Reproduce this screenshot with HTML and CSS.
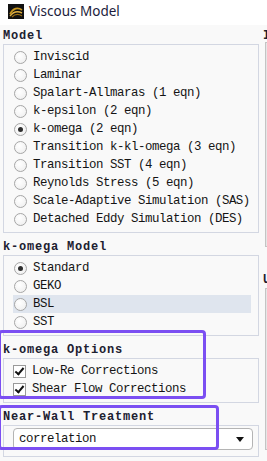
FILE: index.html
```html
<!DOCTYPE html>
<html lang="en">
<head>
  <meta charset="UTF-8" />
  <meta name="viewport" content="width=device-width, initial-scale=1" />
  <title>Viscous Model</title>
  <link rel="stylesheet" href="styles.css">
</head>
<body>
  <!-- Window title -->
  <div class="titlebar">
    <svg class="app-icon" width="16" height="15" viewBox="0 0 16 15">
      <rect width="16" height="15" fill="#111"/>
      <path d="M2 10 C5 4, 10 3, 14 6" stroke="#c8961e" stroke-width="1.6" fill="none"/>
      <path d="M2 12 C6 7, 10 7, 14 9" stroke="#e0b040" stroke-width="1.4" fill="none"/>
      <path d="M4 13 C7 10, 11 10, 14 12" stroke="#9a6e14" stroke-width="1.2" fill="none"/>
    </svg>
    <span class="title">Viscous Model</span>
  </div>

  <div class="content">
    <div class="column left">
      <!-- Model -->
      <div class="group first">
        <div class="group-label">Model</div>
        <div class="box">
          <div class="option"><span class="radio"></span>Inviscid</div>
          <div class="option"><span class="radio"></span>Laminar</div>
          <div class="option"><span class="radio"></span>Spalart-Allmaras (1 eqn)</div>
          <div class="option"><span class="radio"></span>k-epsilon (2 eqn)</div>
          <div class="option"><span class="radio checked"></span>k-omega (2 eqn)</div>
          <div class="option"><span class="radio"></span>Transition k-kl-omega (3 eqn)</div>
          <div class="option"><span class="radio"></span>Transition SST (4 eqn)</div>
          <div class="option"><span class="radio"></span>Reynolds Stress (5 eqn)</div>
          <div class="option"><span class="radio"></span>Scale-Adaptive Simulation (SAS)</div>
          <div class="option"><span class="radio"></span>Detached Eddy Simulation (DES)</div>
        </div>
      </div>

      <!-- k-omega Model -->
      <div class="group">
        <div class="group-label">k-omega Model</div>
        <div class="box">
          <div class="option"><span class="radio checked"></span>Standard</div>
          <div class="option"><span class="radio"></span>GEKO</div>
          <div class="option hover"><span class="radio"></span>BSL</div>
          <div class="option"><span class="radio"></span>SST</div>
        </div>
      </div>

      <!-- k-omega Options -->
      <div class="group">
        <div class="group-label">k-omega Options</div>
        <div class="box">
          <div class="option"><span class="check"></span>Low-Re Corrections</div>
          <div class="option"><span class="check"></span>Shear Flow Corrections</div>
        </div>
      </div>

      <!-- Near-Wall Treatment -->
      <div class="group">
        <div class="group-label">Near-Wall Treatment</div>
        <div class="box tall">
          <div class="dropdown">
            <span>correlation</span>
            <span class="arrow"></span>
          </div>
        </div>
      </div>
    </div>

    <!-- next column, cut off by the window edge -->
    <div class="column right">
      <div class="group first">
        <div class="group-label">I</div>
        <div class="box side top-side"></div>
      </div>
      <div class="group lower">
        <div class="group-label">U</div>
        <div class="box side"></div>
      </div>
    </div>
  </div>

  <!-- annotation frames -->
  <div class="mark mark-options"></div>
  <div class="mark mark-wall"></div>
</body>
</html>
```

FILE: styles.css
```css
/* Page */
html {
  overflow: hidden;
}

body {
  margin: 0;
  background: #f9f9f9;
  font-family: 'Liberation Mono', 'DejaVu Sans Mono', monospace;
  color: #141414;
  overflow: hidden;
  height: 461px;
}

.titlebar {
  height: 25px;
  background: #ffffff;
  display: flex;
  align-items: center;
  padding-left: 8px;
}

.app-icon {
  display: block;
  margin-top: -3px;
}

.title {
  font-family: 'Noto Sans', sans-serif;
  font-size: 13.5px;
  color: #1c1c3c;
  margin-left: 5px;
  margin-top: -3px;
}

.content {
  display: flex;
  padding-left: 3px;
  overflow: hidden;
  height: 436px;
}

.column.left {
  width: 256px;
  flex: none;
}

.column.right {
  flex: none;
  width: 4px;
  margin-left: 4px;
  overflow: hidden;
}

.group {
  margin-top: 5px;
}

.group.first {
  margin-top: 2px;
}

.group.lower {
  margin-top: 24px;
}

.group-label {
  height: 17px;
  line-height: 18px;
  font-weight: 700;
  font-size: 12px;
  letter-spacing: 0.8px;
  color: #1c2030;
  white-space: nowrap;
}

.box {
  border: 1px solid #d3d7e2;
  padding: 3px 7px 4px 9px;
}

.box.tall {
  padding: 2px 5px 6px 9px;
}

/* clipped boxes of the right column */
.box.side {
  margin-left: 2px;
  height: 160px;
  padding: 0;
  border: 1px solid #c4c4c4;
  border-right: none;
  box-shadow: inset 1px 1px 0 #e6e6e6;
}

.box.side.top-side {
  height: 203px;
  margin-top: -2px;
}

/* Radio and check rows */
.option {
  height: 18px;
  display: flex;
  align-items: center;
  padding-left: 1px;
  font-size: 12.4px;
  letter-spacing: -0.44px;
  white-space: nowrap;
}

.option.hover {
  background: #dfe5ee;
}

.radio {
  width: 11px;
  height: 11px;
  border: 1px solid #a6a6a6;
  border-radius: 50%;
  background: radial-gradient(circle at 40% 35%, #ffffff, #ececec);
  margin-right: 6px;
  position: relative;
  flex: none;
}

.radio.checked::after {
  content: "";
  position: absolute;
  left: 3px;
  top: 3px;
  width: 5px;
  height: 5px;
  border-radius: 50%;
  background: #2e2e2e;
}

.check {
  width: 11px;
  height: 11px;
  border: 1px solid #9a9a9a;
  background: #ffffff;
  margin-right: 6px;
  margin-left: -1px;
  position: relative;
  flex: none;
}

.check::after {
  content: "";
  position: absolute;
  left: 3px;
  top: 0px;
  width: 3px;
  height: 7px;
  border: solid #111;
  border-width: 0 2px 2px 0;
  transform: rotate(40deg);
}

/* Dropdown */
.dropdown {
  height: 20px;
  border: 1px solid #b4b4b4;
  border-radius: 4px;
  background: #ffffff;
  display: flex;
  align-items: center;
  justify-content: space-between;
  padding: 0 8px 0 5px;
  font-size: 12.4px;
  letter-spacing: -0.44px;
}

.arrow {
  width: 0;
  height: 0;
  border-left: 4px solid transparent;
  border-right: 4px solid transparent;
  border-top: 5px solid #111;
}

/* Purple annotation frames */
.mark {
  position: absolute;
  border: 3px solid #7b4ff2;
  border-radius: 4px;
}

.mark-options {
  left: -2px;
  top: 330px;
  width: 202px;
  height: 63px;
}

.mark-wall {
  left: -2px;
  top: 405px;
  width: 215px;
  height: 39px;
}
```
